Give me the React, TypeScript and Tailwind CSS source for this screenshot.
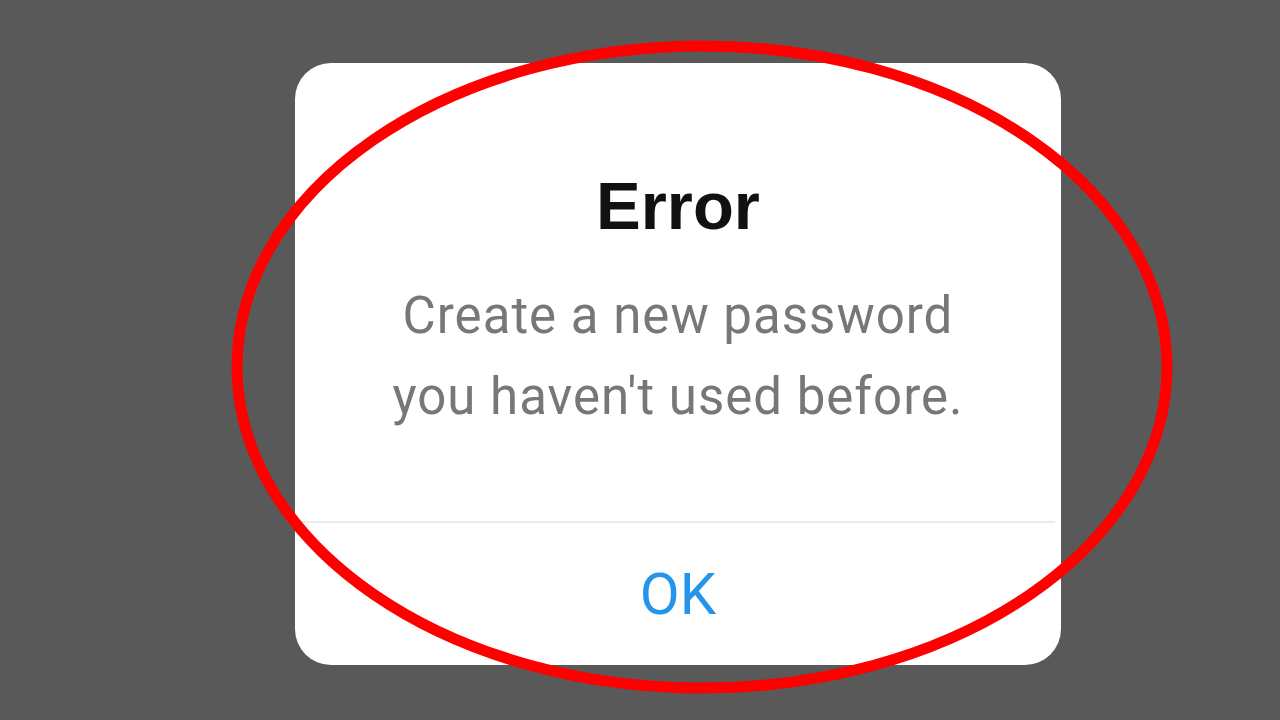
export default function App() {
  return (
    <div
      className="relative w-[1280px] h-[720px] overflow-hidden bg-[#595959] pl-[295px] pt-[63px]"
      style={{ fontFamily: "Roboto, 'Noto Sans', Arial, sans-serif" }}
    >
      {/* Alert dialog */}
      <div className="w-[766px] h-[602px] bg-white rounded-[36px] flex flex-col">
        <div className="pt-[109px] flex flex-col items-center">
          <h1
            className="text-[67px] leading-[67px] font-bold text-[#111111]"
            style={{ fontFamily: "'Liberation Sans', Arial, sans-serif" }}
          >
            Error
          </h1>
          <p className="mt-[36px] text-[51px] leading-[81px] tracking-[1px] text-[#777777] text-center">
            Create a new password
            <br />
            you haven't used before.
          </p>
        </div>
        <div className="mt-auto h-[2px] bg-[#ebebeb] mr-[6px]" />
        <button className="h-[142px] flex items-center justify-center text-[58px] text-[#2595ea]">
          OK
        </button>
      </div>

      {/* Red highlight ring drawn over the dialog */}
      <svg
        className="absolute inset-0 pointer-events-none"
        width="1280"
        height="720"
        viewBox="0 0 1280 720"
      >
        <ellipse cx="702" cy="367" rx="465" ry="321" fill="none" stroke="#ff0000" strokeWidth="11" />
      </svg>
    </div>
  );
}
